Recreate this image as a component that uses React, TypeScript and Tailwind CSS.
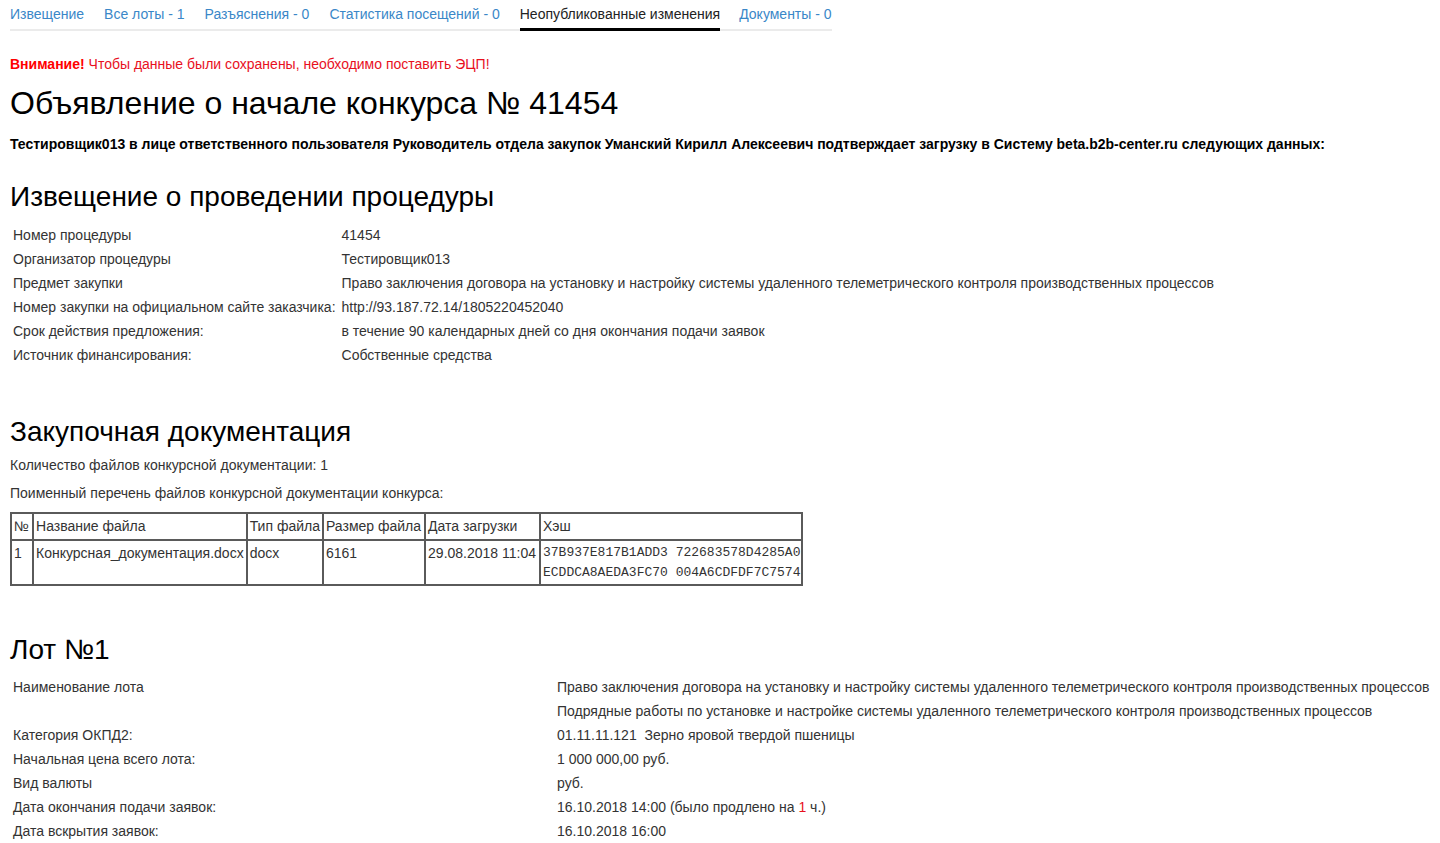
import React from "react";

const tabs = [
  { label: "Извещение" },
  { label: "Все лоты - 1" },
  { label: "Разъяснения - 0" },
  { label: "Статистика посещений - 0" },
  { label: "Неопубликованные изменения", active: true },
  { label: "Документы - 0" },
];

const noticeRows: [string, string][] = [
  ["Номер процедуры", "41454"],
  ["Организатор процедуры", "Тестировщик013"],
  [
    "Предмет закупки",
    "Право заключения договора на установку и настройку системы удаленного телеметрического контроля производственных процессов",
  ],
  ["Номер закупки на официальном сайте заказчика:", "http://93.187.72.14/1805220452040"],
  ["Срок действия предложения:", "в течение 90 календарных дней со дня окончания подачи заявок"],
  ["Источник финансирования:", "Собственные средства"],
];

// right padding per column, tuned to the reference widths
const docCols = [
  { title: "№", pr: "pr-[3px]" },
  { title: "Название файла", pr: "pr-[2px]" },
  { title: "Тип файла", pr: "pr-[2px]" },
  { title: "Размер файла", pr: "pr-[3px]" },
  { title: "Дата загрузки", pr: "pr-[3px]" },
  { title: "Хэш", pr: "pr-[1px]" },
];

const cell = "border-2 border-[#5a5a5a] pl-[2px] pt-[2px]";

export default function App() {
  return (
    <div className="min-h-screen bg-white pl-[10px] text-[14px] leading-[20px] text-[#333] font-['Liberation_Sans',Arial,sans-serif]">
      {/* tabs */}
      <div className="flex w-[822px] border-b-2 border-[#ebebeb] pt-[4px]">
        {tabs.map((t) => (
          <a
            key={t.label}
            href="#"
            className={
              t.active
                ? "mr-[19px] -mb-[2px] border-b-[3px] border-black pb-[4px] text-[#222]"
                : "mr-[20px] pb-[5px] text-[#3a87c8] last:mr-0"
            }
          >
            {t.label}
          </a>
        ))}
      </div>

      <p className="mt-[23px] text-[#e8101e]">
        <b className="text-[#f00]">Внимание!</b> Чтобы данные были сохранены, необходимо поставить ЭЦП!
      </p>

      <h1 className="mt-[11px] text-[32px] leading-[36px] text-black">
        Объявление о начале конкурса № 41454
      </h1>

      <p className="mt-[13px] text-[14px] font-bold text-black">
        Тестировщик013 в лице ответственного пользователя Руководитель отдела закупок Уманский Кирилл
        Алексеевич подтверждает загрузку в Систему beta.b2b-center.ru следующих данных:
      </p>

      <h2 className="mt-[27px] text-[28px] leading-[32px] text-black">Извещение о проведении процедуры</h2>
      <table className="mt-[10px] border-collapse">
        <tbody>
          {noticeRows.map(([k, v]) => (
            <tr key={k}>
              <td className="px-[3px] py-[2px] align-top whitespace-nowrap">{k}</td>
              <td className="px-[3px] py-[2px] align-top">{v}</td>
            </tr>
          ))}
        </tbody>
      </table>

      <h2 className="mt-[49px] text-[28px] leading-[32px] text-black">Закупочная документация</h2>
      <p className="mt-[7px]">Количество файлов конкурсной документации: 1</p>
      <p className="mt-[8px]">Поименный перечень файлов конкурсной документации конкурса:</p>

      <table className="mt-[9px] border-collapse border-2 border-[#5a5a5a]">
        <thead>
          <tr>
            {docCols.map((c) => (
              <th key={c.title} className={`${cell} ${c.pr} pb-[3px] text-left font-normal`}>
                {c.title}
              </th>
            ))}
          </tr>
        </thead>
        <tbody>
          <tr className="align-top">
            <td className={`${cell} pr-[3px] pb-[1px]`}>1</td>
            <td className={`${cell} pr-[2px]`}>Конкурсная_документация.docx</td>
            <td className={`${cell} pr-[2px]`}>docx</td>
            <td className={`${cell} pr-[3px]`}>6161</td>
            <td className={`${cell} pr-[3px]`}>29.08.2018 11:04</td>
            <td className={`${cell} pr-[1px] pb-[1px] whitespace-nowrap font-['Liberation_Mono',monospace] text-[13px]`}>
              37B937E817B1ADD3 722683578D4285A0
              <br />
              ECDDCA8AEDA3FC70 004A6CDFDF7C7574
            </td>
          </tr>
        </tbody>
      </table>

      <h2 className="mt-[48px] text-[28px] leading-[32px] text-black">Лот №1</h2>
      <table className="mt-[9px] border-collapse">
        <tbody>
          <tr>
            <td className="w-[544px] px-[3px] py-[2px] align-top">Наименование лота</td>
            <td className="px-[3px] py-[2px]">
              Право заключения договора на установку и настройку системы удаленного телеметрического
              контроля производственных процессов
            </td>
          </tr>
          <tr>
            <td className="px-[3px] py-[2px]"></td>
            <td className="px-[3px] py-[2px]">
              Подрядные работы по установке и настройке системы удаленного телеметрического контроля
              производственных процессов
            </td>
          </tr>
          <tr>
            <td className="px-[3px] py-[2px]">Категория ОКПД2:</td>
            <td className="px-[3px] py-[2px] whitespace-pre">01.11.11.121  Зерно яровой твердой пшеницы</td>
          </tr>
          <tr>
            <td className="px-[3px] py-[2px]">Начальная цена всего лота:</td>
            <td className="px-[3px] py-[2px]">1 000 000,00 руб.</td>
          </tr>
          <tr>
            <td className="px-[3px] py-[2px]">Вид валюты</td>
            <td className="px-[3px] py-[2px]">руб.</td>
          </tr>
          <tr>
            <td className="px-[3px] py-[2px]">Дата окончания подачи заявок:</td>
            <td className="px-[3px] py-[2px]">
              16.10.2018 14:00 (было продлено на <span className="text-[#e8101e]">1</span> ч.)
            </td>
          </tr>
          <tr>
            <td className="px-[3px] py-[2px]">Дата вскрытия заявок:</td>
            <td className="px-[3px] py-[2px]">16.10.2018 16:00</td>
          </tr>
        </tbody>
      </table>
    </div>
  );
}
